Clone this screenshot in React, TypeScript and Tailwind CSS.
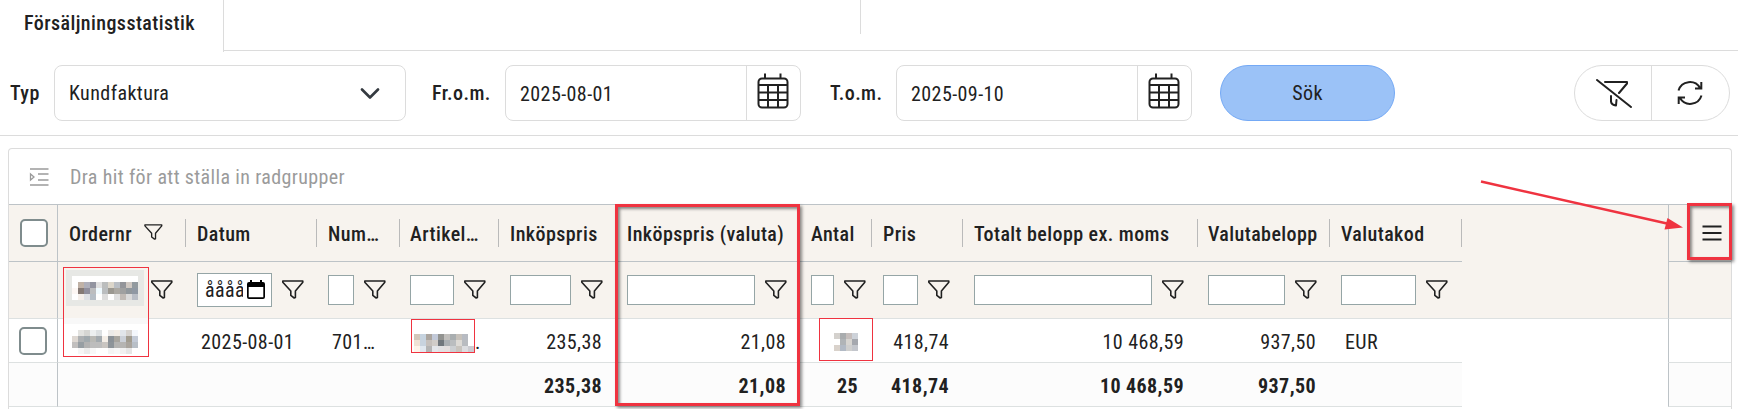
import type { ReactNode } from "react";

type Column = {
  title: string;
  width: string;
  value?: string;
  total?: string;
  right?: boolean;
  type?: "order" | "date";
  // padding of the title and of the filter cell
  pad?: string;
  filterPad?: string;
};

const columns: Column[] = [
  { title: "Ordernr", width: "w-32", type: "order" },
  { title: "Datum", width: "w-[131px]", value: "2025-08-01", type: "date" },
  { title: "Num…", width: "w-[83px]", value: "701…", filterPad: "pl-[11px] pr-3.5" },
  { title: "Artikel…", width: "w-[99px]", pad: "pl-2.5", filterPad: "pl-2.5 pr-[13px]" },
  { title: "Inköpspris", width: "w-[117px]", value: "235,38", total: "235,38", right: true },
  { title: "Inköpspris (valuta)", width: "w-[184px]", value: "21,08", total: "21,08", right: true },
  { title: "Antal", width: "w-[72px]", total: "25", right: true, filterPad: "pl-[11px] pr-1.5" },
  { title: "Pris", width: "w-[91px]", value: "418,74", total: "418,74", right: true },
  { title: "Totalt belopp ex. moms", width: "w-[235px]", value: "10 468,59", total: "10 468,59", right: true, filterPad: "pl-[11px] pr-3.5" },
  { title: "Valutabelopp", width: "w-[132px]", value: "937,50", total: "937,50", right: true, pad: "pl-2.5", filterPad: "pl-2.5 pr-[13px]" },
  { title: "Valutakod", width: "w-[132px]", value: "EUR", filterPad: "pl-[11px] pr-3.5" },
];

const orderFilterPixels = [
  ["#ffffff", "#c0b2a6", "#aeafba", "#9294a0", "#e0e0e0", "#bbbdbd", "#dcd6ca", "#b9bec4", "#93959a", "#cfc8c2", "#929a9f"],
  ["#fdf7f4", "#857a75", "#908f9d", "#bcbdbf", "#effaff", "#babdbf", "#9b9891", "#aba8a2", "#9fa0a0", "#90979c", "#8f98a3"],
  ["#ffffff", "#f5efea", "#dfe1e5", "#b6bec6", "#ffffff", "#dddddd", "#ffffff", "#e0e0e0", "#c0bab5", "#dadada", "#b9bec6"],
];

const orderPixels = [
  ["#ffffff", "#e3e3e0", "#d6d6d3", "#eceff0", "#dce0e2", "#ffffff", "#eceae8", "#f2ece6", "#e1e5ea", "#d5d2cf", "#f4f7fc"],
  ["#ded8d2", "#adb0b2", "#a1a9ad", "#b9b9b5", "#a3aaaf", "#f4eee7", "#8b9197", "#a8a59f", "#cbd0d8", "#a19c90", "#c3cad6"],
  ["#c1bfbe", "#979ea3", "#b2b2b2", "#bdbdbd", "#bdbdbd", "#c9c5c1", "#8e9499", "#b5b4b2", "#b5b4b2", "#a9a49d", "#b8bfc7"],
  ["#ffffff", "#f6f6f6", "#ececec", "#f8f8f8", "#ffffff", "#ffffff", "#f4f4f4", "#f8f8f8", "#f1f1f1", "#e6e6e6", "#ffffff"],
];

const articlePixels = [
  ["#d3c8bb", "#c6d3df", "#aba59f", "#c2c9d8", "#929390", "#c1bfbc", "#a9aeb0", "#c6c1ba", "#b7bbc2", "#ffffff"],
  ["#f0e2d5", "#c8d3de", "#c5c0bc", "#d0ccc8", "#70777d", "#abb0b4", "#babdbf", "#dddad5", "#b9bcc0", "#ffffff"],
  ["#fdf4ea", "#e1e8ef", "#b4b4b4", "#e3e6ea", "#e1e1e3", "#e3dfdf", "#cccfd2", "#c8c4be", "#dcdde0", "#ccccd1"],
];

const amountPixels = [
  ["#d4d1cd", "#a9acae", "#c5bebc", "#cdd2d9"],
  ["#ffffff", "#b0b4b7", "#d7d5d1", "#a5a8ae"],
  ["#d9d2cb", "#b2bac5", "#cfcfce", "#c3c6cc"],
];

function Mosaic({ rows }: { rows: string[][] }) {
  return (
    <div className="flex flex-col">
      {rows.map((row, y) => (
        <div key={y} className="flex">
          {row.map((color, x) => (
            <div key={x} className="size-1.5 shrink-0" style={{ backgroundColor: color }} />
          ))}
        </div>
      ))}
    </div>
  );
}

function FunnelIcon({ className }: { className: string }) {
  return (
    <svg viewBox="0 0 22 19" className={className} fill="none" stroke="#212121" strokeWidth="1.6" strokeLinejoin="round">
      <path d="M.8 1H20.8V2.2L13.4 11V17.6L12.2 18L8.800 15.4V11L.8 2.2Z" />
    </svg>
  );
}

function CalendarIcon() {
  return (
    <svg viewBox="0 0 32 36" className="mr-px mb-1 h-9 w-8" fill="none" stroke="#212121" strokeWidth="2">
      <rect x="1.5" y="5.5" width="29" height="29" rx="3.5" />
      <path d="M8 .5V5M23.500 .5V5M1 12H31M1 19.500H31M1 27H31M11 12V34M21 12V34" />
    </svg>
  );
}

function DateField({ label, labelWidth, value }: { label: string; labelWidth: string; value: string }) {
  return (
    <div className="flex items-center">
      <span className={`font-medium ${labelWidth}`}>{label}</span>
      <div className="flex h-14 w-74 overflow-hidden rounded-lg border border-[#dcdcdc] bg-white">
        <div className="flex flex-1 items-center pt-0.5 pl-3.5">{value}</div>
        <div className="flex w-[54px] items-center justify-center border-l border-[#dcdcdc]">
          <CalendarIcon />
        </div>
      </div>
    </div>
  );
}

function Checkbox() {
  return <div className="size-7 rounded-[5px] border-2 border-[#7f8c8d] bg-white" />;
}

type GridRowProps = {
  first?: ReactNode;
  last?: ReactNode;
  className: string;
  cellClass?: string;
  fillClass?: string;
  children: ReactNode;
};

function GridRow({ first, last, className, cellClass = "", fillClass = "", children }: GridRowProps) {
  return (
    <div className={`flex ${className}`}>
      <div className={`flex w-[49px] items-center justify-center border-r border-b border-inherit border-r-[#bdc3c7] ${cellClass}`}>{first}</div>
      <div className={`flex w-[1404px] border-b border-inherit ${cellClass}`}>{children}</div>
      <div className={`w-[206px] border-inherit ${fillClass}`} />
      <div className={`flex flex-1 items-center border-b border-l border-inherit border-l-[#bdc3c7] ${cellClass}`}>{last}</div>
    </div>
  );
}

function FilterInput({ type }: { type?: "order" | "date" }) {
  if (type === "date") {
    return (
      <div className="flex h-[34px] flex-1 items-center border border-[#95a5a6] bg-white pl-[7px]">
        <span className="w-[38px] overflow-hidden">åååå</span>
        <svg viewBox="0 0 18 20" className="ml-1 h-5 w-[18px] shrink-0">
          <path d="M2 2H3V0H5V2H13V0H15V2H16Q18 2 18 4V17Q18 19 16 19H2Q0 19 0 17V4Q0 2 2 2ZM1.700 7V17.300H16.300V7Z" fill="#000" fillRule="evenodd" />
        </svg>
      </div>
    );
  }
  return <div className="h-[30px] flex-1 border border-[#95a5a6] bg-white" />;
}

export default function App() {
  return (
    <div className="relative h-[409px] w-[1738px] overflow-hidden bg-white font-['Roboto_Condensed',Roboto,sans-serif] text-[20px] leading-7 tracking-[0.42px] text-[#212121] [font-stretch:75%]">
      {/* Tabs */}
      <div className="flex h-[51px]">
        <div className="flex h-[52px] w-56 items-center border-r border-[#dcdcdc] pb-1.5 pl-6 font-medium">
          Försäljningsstatistik
        </div>
        <div className="flex-1 border-b border-[#dcdcdc]">
          <div className="h-[34px] w-[637px] border-r border-[#dcdcdc]" />
        </div>
      </div>

      {/* Toolbar */}
      <div className="flex h-[85px] items-center border-b border-[#dcdcdc] pr-2 pl-2.5">
        <span className="w-11 font-medium">Typ</span>
        <div className="mr-[26px] flex h-14 w-[352px] items-center justify-between rounded-lg border border-[#dcdcdc] pr-[25px] pl-3.5">
          Kundfaktura
          <svg viewBox="0 0 20 11" className="h-[11px] w-5" fill="none" stroke="#343a40" strokeWidth="2.6" strokeLinecap="round" strokeLinejoin="round">
            <path d="M2 1.500L10 9.500L18 1.500" />
          </svg>
        </div>
        <div className="flex gap-[29px]">
          <DateField label="Fr.o.m." labelWidth="w-[73px]" value="2025-08-01" />
          <DateField label="T.o.m." labelWidth="w-[66px]" value="2025-09-10" />
        </div>
        <button className="ml-7 flex h-14 w-[175px] items-center justify-center rounded-full border border-[#74a9f5] bg-[#9bc2f7] tracking-[0.42px]">
          Sök
        </button>
        <div className="ml-auto flex h-14 w-[156px] rounded-full border border-[#dcdcdc]">
          <div className="flex w-[77px] items-center justify-center border-r border-[#dcdcdc]">
            <svg viewBox="0 0 36 29" className="ml-0.5 h-[29px] w-9" fill="none" stroke="#212121" strokeWidth="2" strokeLinecap="round" strokeLinejoin="round">
              <path d="M1 1L35 28M9 3H31V4.500L23 14M15 17V22.500Q15.500 26 20 26.500L20.500 21" />
            </svg>
          </div>
          <div className="flex flex-1 items-center justify-center pr-px">
            <svg viewBox="0 0 26 26" className="size-[26px]" fill="none" stroke="#212121" strokeWidth="2">
              <path d="M1.500 10.500A11.800 11.800 0 0 1 23 8M24.300 2V8.500H18M24.500 15.500A11.800 11.800 0 0 1 3 18M1.700 24V17.500H8" />
            </svg>
          </div>
        </div>
      </div>

      {/* Grid */}
      <div className="mx-2 mt-3 h-[262px] w-[1724px] rounded-t border border-b-0 border-[#dcdcdc]">
        <div className="flex h-[55px] items-center pl-5 tracking-[0.36px] text-[#9b9b9b]">
          <svg viewBox="0 0 20 18" className="mr-[21px] h-[18px] w-5" fill="none" stroke="#9b9b9b" strokeWidth="1.300">
            <path d="M1 1H19.500M9 6H19.500M9 12H19.500M1 17H19.500M1.500 6V12L5 9Z" />
          </svg>
          Dra hit för att ställa in radgrupper
        </div>

        <GridRow
          className="h-[58px] border-t border-[#bdc3c7] bg-[#f7f3ee]"
          first={<div className="pl-0.5"><Checkbox /></div>}
          last={
            <svg viewBox="0 0 20 16" className="ml-[33px] h-4 w-5" stroke="#212121" strokeWidth="2">
              <path d="M.5 1.500H19.500M.5 8H19.500M.5 14.500H19.500" />
            </svg>
          }
        >
          {columns.map((col) => (
            <div key={col.title} className={`flex shrink-0 items-center ${col.width}`}>
              <div className={`flex h-7 flex-1 items-center border-r border-[#bababa] font-medium whitespace-nowrap ${col.pad ?? "pl-[11px]"}`}>
                <span className="pt-0.5">{col.title}</span>
                {col.type === "order" && <FunnelIcon className="mb-0.5 ml-3 h-4 w-[19px]" />}
              </div>
            </div>
          ))}
        </GridRow>

        <GridRow className="h-[57px] border-[#dde1e1] bg-[#f7f3ee]" fillClass="border-b">
          {columns.map((col) => (
            <div key={col.title} className={`flex shrink-0 items-center ${col.width} ${col.filterPad ?? "pl-[11px] pr-[13px]"}`}>
              <FilterInput type={col.type} />
              <FunnelIcon className="mb-0.5 ml-2.5 h-[19px] w-[22px]" />
            </div>
          ))}
        </GridRow>

        <GridRow className="h-11 border-[#dde1e1]" first={<Checkbox />}>
          {columns.map((col) => (
            <div key={col.title} className={`flex shrink-0 items-center pt-0.5 pr-3.5 pl-[15px] ${col.width} ${col.right ? "justify-end" : ""}`}>
              {col.value}
            </div>
          ))}
        </GridRow>

        <GridRow className="h-11 border-[#dde1e1]" cellClass="bg-[#fcfcfc]">
          {columns.map((col) => (
            <div key={col.title} className={`flex shrink-0 items-center justify-end pt-0.5 pr-3.5 font-bold ${col.width}`}>
              {col.total}
            </div>
          ))}
        </GridRow>
      </div>

      {/* Redacted values */}
      <div className="absolute top-[267px] left-[63px] h-[90px] w-[86px] border border-[#ef3340] bg-white">
        <div className="flex h-[50px] flex-col bg-[#f7f3ee] pt-0.5 pl-0.5">
          <div className="w-[78px] border-6 border-[#e7e8e5] bg-white pt-1.5">
            <Mosaic rows={orderFilterPixels} />
          </div>
        </div>
        <div className="mb-1.5 h-1.5 bg-[#f8f8f8]" />
        <div className="pl-2">
          <Mosaic rows={orderPixels} />
        </div>
      </div>
      <div className="absolute top-[328px] left-[475px]">.</div>
      <div className="absolute top-[319px] left-[411px] h-[34px] w-16 border border-[#ef3340] bg-white pt-3.5 pl-0.5">
        <Mosaic rows={articlePixels} />
      </div>
      <div className="absolute top-[318px] left-[819px] h-[43px] w-[54px] border border-[#ef3340] bg-white pt-3.5 pl-3.5">
        <Mosaic rows={amountPixels} />
      </div>

      {/* Highlights */}
      <div className="absolute top-[204px] left-[615px] h-[202px] w-[185px] border-3 border-[#ef3340] shadow-[2px_2px_3px_rgba(0,0,0,0.45),inset_2px_2px_3px_rgba(0,0,0,0.45)]" />
      <div className="absolute top-[203px] left-[1687px] h-[57px] w-[45px] border-3 border-[#ef3340] shadow-[2px_2px_3px_rgba(0,0,0,0.45),inset_2px_2px_3px_rgba(0,0,0,0.45)]" />
      <svg viewBox="0 0 204 50" className="absolute top-[180px] left-[1480px] h-[50px] w-[204px]">
        <path d="M1 1.500L187 43.500" stroke="#ef3340" strokeWidth="2.500" />
        <path d="M187.500 38L203 47.500L184.500 49.500Z" fill="#ef3340" />
      </svg>
    </div>
  );
}
